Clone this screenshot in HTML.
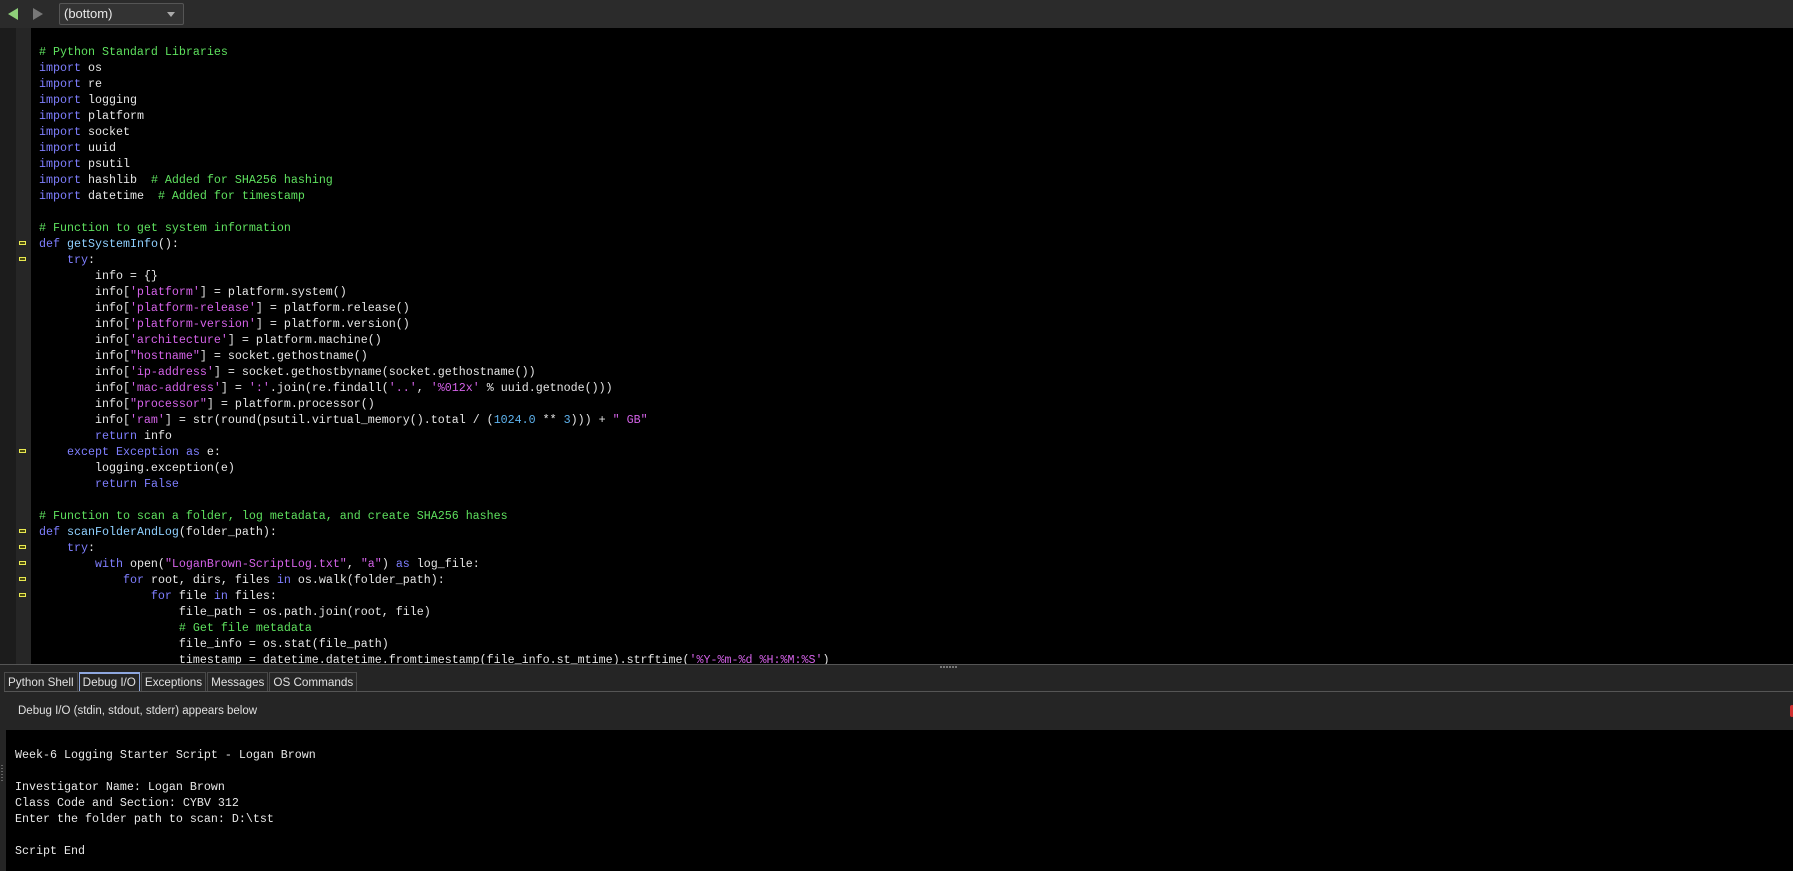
<!DOCTYPE html>
<html><head><meta charset="utf-8"><style>
*{margin:0;padding:0;box-sizing:border-box}
body{width:1793px;height:871px;background:#252525;position:relative;overflow:hidden;font-family:"Liberation Sans",sans-serif}
.tb{position:absolute;left:0;top:0;width:1793px;height:28px;background:#2b2b2b}
.dd{position:absolute;left:59px;top:3px;width:125px;height:22px;border:1px solid #555;border-radius:2px;background:#333;color:#e8e8e8;font-size:13px;line-height:20px;padding-left:4px}
.dd:after{content:"";position:absolute;right:8px;top:8px;border-left:4px solid transparent;border-right:4px solid transparent;border-top:5px solid #aaa}
.gut1{position:absolute;left:0;top:28px;width:16px;height:636px;background:#1c1c1c}
.gut2{position:absolute;left:16px;top:28px;width:15px;height:636px;background:#262626}
.ed{position:absolute;left:31px;top:28px;width:1762px;height:636px;background:#000;overflow:hidden}
pre{font-family:"Liberation Mono",monospace;white-space:pre}
.code{position:absolute;left:8px;top:15.5px;font-size:11.67px;line-height:16px;color:#e6e6e6}
.k{color:#7f7fff}.c{color:#5ee05e}.s{color:#d462e8}.n{color:#5fb4f0}.f{color:#8fd0ff}
.mk{position:absolute;left:19px;width:7px;height:4px;border:1px solid #e8e850;background:#4a4a10}
.split{position:absolute;left:0;top:664px;width:1793px;height:1px;background:#555}
.tabs{position:absolute;left:4px;top:672px;height:20px;display:flex}
.tab{height:20px;border:1px solid #4a4a4a;border-bottom:none;color:#e0e0e0;font-size:11.7px;line-height:19px;padding:0 3px;margin-right:1px;background:#262626}
.tab.sel{border-top:2px solid #8fa8e0;border-left-color:#8fa8e0;border-right-color:#8fa8e0;line-height:17px}
.tl{position:absolute;left:4px;top:691px;width:1789px;height:1px;background:#555}
.hdr{position:absolute;left:18px;top:705px;color:#e0e0e0;font-size:11.5px}
.out{position:absolute;left:6px;top:730px;width:1787px;height:141px;background:#000}
.ot{position:absolute;left:9px;top:17px;font-size:11.67px;line-height:16px;color:#e8e8e8}
</style></head><body>
<div class="tb">
<svg style="position:absolute;left:8px;top:8px" width="10" height="12"><polygon points="10,0 10,12 0,6" fill="#8fd07a"/></svg>
<svg style="position:absolute;left:33px;top:8px" width="10" height="12"><polygon points="0,0 0,12 10,6" fill="#777"/></svg>
<div class="dd">(bottom)</div>
</div>
<div class="gut1"></div><div class="gut2"></div>
<div class="mk" style="top:241px"></div>
<div class="mk" style="top:257px"></div>
<div class="mk" style="top:449px"></div>
<div class="mk" style="top:529px"></div>
<div class="mk" style="top:545px"></div>
<div class="mk" style="top:561px"></div>
<div class="mk" style="top:577px"></div>
<div class="mk" style="top:593px"></div>
<div class="ed"><pre class="code"><span class="c"># Python Standard Libraries</span>
<span class="k">import</span> os
<span class="k">import</span> re
<span class="k">import</span> logging
<span class="k">import</span> platform
<span class="k">import</span> socket
<span class="k">import</span> uuid
<span class="k">import</span> psutil
<span class="k">import</span> hashlib  <span class="c"># Added for SHA256 hashing</span>
<span class="k">import</span> datetime  <span class="c"># Added for timestamp</span>

<span class="c"># Function to get system information</span>
<span class="k">def</span> <span class="f">getSystemInfo</span>():
    <span class="k">try</span>:
        info = {}
        info[<span class="s">'platform'</span>] = platform.system()
        info[<span class="s">'platform-release'</span>] = platform.release()
        info[<span class="s">'platform-version'</span>] = platform.version()
        info[<span class="s">'architecture'</span>] = platform.machine()
        info[<span class="s">"hostname"</span>] = socket.gethostname()
        info[<span class="s">'ip-address'</span>] = socket.gethostbyname(socket.gethostname())
        info[<span class="s">'mac-address'</span>] = <span class="s">':'</span>.join(re.findall(<span class="s">'..'</span>, <span class="s">'%012x'</span> % uuid.getnode()))
        info[<span class="s">"processor"</span>] = platform.processor()
        info[<span class="s">'ram'</span>] = str(round(psutil.virtual_memory().total / (<span class="n">1024.0</span> ** <span class="n">3</span>))) + <span class="s">" GB"</span>
        <span class="k">return</span> info
    <span class="k">except</span> <span class="k">Exception</span> <span class="k">as</span> e:
        logging.exception(e)
        <span class="k">return</span> <span class="k">False</span>

<span class="c"># Function to scan a folder, log metadata, and create SHA256 hashes</span>
<span class="k">def</span> <span class="f">scanFolderAndLog</span>(folder_path):
    <span class="k">try</span>:
        <span class="k">with</span> open(<span class="s">"LoganBrown-ScriptLog.txt"</span>, <span class="s">"a"</span>) <span class="k">as</span> log_file:
            <span class="k">for</span> root, dirs, files <span class="k">in</span> os.walk(folder_path):
                <span class="k">for</span> file <span class="k">in</span> files:
                    file_path = os.path.join(root, file)
                    <span class="c"># Get file metadata</span>
                    file_info = os.stat(file_path)
                    timestamp = datetime.datetime.fromtimestamp(file_info.st_mtime).strftime(<span class="s">'%Y-%m-%d %H:%M:%S'</span>)
</pre></div>
<div class="split"></div>
<div style="position:absolute;left:940px;top:666px;width:18px;height:2px;background:repeating-linear-gradient(90deg,#777 0 2px,transparent 2px 3px)"></div>
<div class="tabs">
<div class="tab">Python Shell</div><div class="tab sel">Debug I/O</div><div class="tab">Exceptions</div><div class="tab">Messages</div><div class="tab">OS Commands</div>
</div>
<div class="tl"></div>
<div class="hdr">Debug I/O (stdin, stdout, stderr) appears below</div>
<div style="position:absolute;left:1790px;top:705px;width:4px;height:12px;background:#d03030;border-radius:2px"></div>
<div class="out"><pre class="ot">Week-6 Logging Starter Script - Logan Brown

Investigator Name: Logan Brown
Class Code and Section: CYBV 312
Enter the folder path to scan: D:\tst

Script End</pre></div>
<div style="position:absolute;left:1px;top:765px;width:2px;height:16px;background:repeating-linear-gradient(#666 0 1px,transparent 1px 3px)"></div>
</body></html>
